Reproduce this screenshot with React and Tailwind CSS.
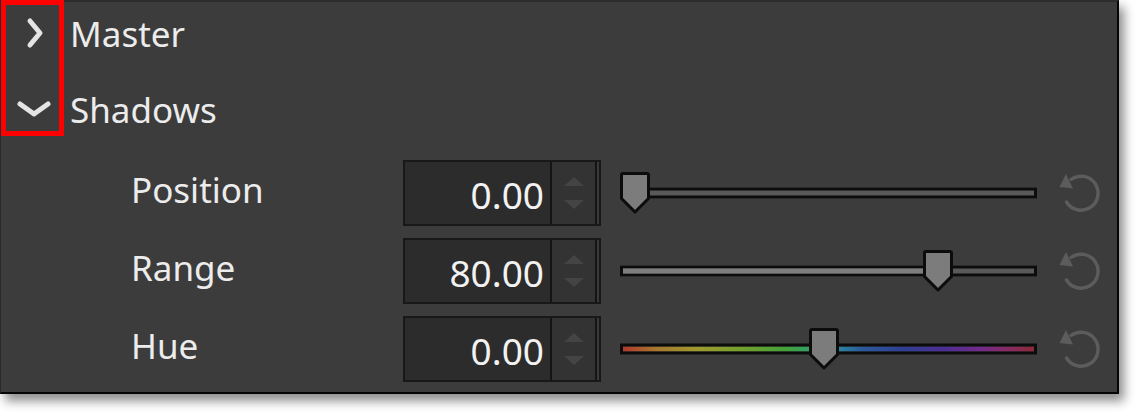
import { useState } from 'react'

const params = [
  { label: 'Position', value: '0.00', thumb: -1, kind: 'plain' },
  { label: 'Range', value: '80.00', thumb: 302, kind: 'filled' },
  { label: 'Hue', value: '0.00', thumb: 188, kind: 'hue' },
]

function ChevronRight() {
  return (
    <svg width="18" height="32" viewBox="0 0 18 32" fill="none">
      <path d="M4 4 L14 16 L4 28" stroke="#e4e4e4" strokeWidth="5" strokeLinecap="round" strokeLinejoin="round" />
    </svg>
  )
}

function ChevronDown() {
  return (
    <svg width="36" height="18" viewBox="0 0 36 18" fill="none">
      <path d="M4 4 L18 14 L32 4" stroke="#e4e4e4" strokeWidth="5" strokeLinecap="round" strokeLinejoin="round" />
    </svg>
  )
}

function Spinner() {
  return (
    <div className="flex h-full w-[43px] flex-col items-center justify-center gap-[14px] bg-[#333333]">
      <svg width="20" height="9" viewBox="0 0 20 9">
        <polygon points="10,0 20,9 0,9" fill="#444444" />
      </svg>
      <svg width="20" height="9" viewBox="0 0 20 9">
        <polygon points="0,0 20,0 10,9" fill="#444444" />
      </svg>
    </div>
  )
}

function NumberBox({ value }) {
  return (
    <div className="flex h-[66px] w-[198px] border-2 border-[#181818] bg-[#2c2c2c]">
      <div className="flex h-full w-[145px] items-center justify-end pr-[6px] pt-[4px] text-[37px] text-[#f2f2f2]">
        {value}
      </div>
      <div className="h-full w-[2px] bg-[#141414]" />
      <Spinner />
      <div className="h-full w-[2px] bg-[#141414]" />
      <div className="h-full flex-1 bg-[#3a3a3a]" />
    </div>
  )
}

function Thumb({ left }) {
  return (
    <svg
      className="absolute top-1/2 -translate-y-1/2"
      style={{ left }}
      width="32"
      height="43"
      viewBox="0 0 32 43"
    >
      <path
        d="M2.5 3.5 Q2.5 2 4 2 L28 2 Q29.5 2 29.5 3.5 L29.5 27 L16 40.5 L2.5 27 Z"
        fill="#7c7c7c"
        stroke="#0c0c0c"
        strokeWidth="3"
        strokeLinejoin="round"
      />
    </svg>
  )
}

function Slider({ thumb, kind }) {
  let track = 'bg-[#595959]'
  if (kind === 'hue') {
    track =
      'bg-[linear-gradient(90deg,#b3382c_0%,#a7772e_8%,#9e9a2e_18%,#6fa12e_30%,#42a13a_40%,#2aa07c_48%,#2a8aa0_52%,#2a5a9c_58%,#2f3e94_68%,#4b2e94_78%,#6e2a8c_86%,#862a68_93%,#8c2a36_100%)]'
  }
  return (
    <div className="relative h-[44px] w-[417px]">
      <div className={`absolute left-0 right-0 top-1/2 h-[11px] -translate-y-1/2 border-[3px] border-[#0c0c0c] ${track}`}>
        {kind === 'filled' && <div className="h-full w-[310px] bg-[#7e7e7e]" />}
      </div>
      <Thumb left={thumb} />
    </div>
  )
}

function ResetIcon() {
  return (
    <svg width="46" height="44" viewBox="0 0 46 44" fill="none">
      <path d="M13 8.5 A17 17 0 1 1 8.5 31" stroke="#5c5c5c" strokeWidth="3.4" strokeLinecap="round" />
      <polygon points="8,3 1.5,16 15,17.5" fill="#5c5c5c" />
    </svg>
  )
}

export default function App() {
  const [open] = useState(true)

  return (
    <div className="h-[412px] w-[1137px] bg-white" style={{ fontFamily: '"Noto Sans", "Open Sans", sans-serif' }}>
      <div className="relative h-[394px] w-[1119px] border-b-2 border-l border-r-2 border-t-2 border-b-[#050505] border-l-[#2a2a2a] border-r-[#050505] border-t-[#2c2c2c] bg-[#3c3c3c] shadow-[5px_7px_10px_rgba(0,0,0,0.45)]">
        {/* highlighted toggle column */}
        <div className="absolute left-0 top-[-2px] h-[136px] w-[63px] border-[5px] border-[#ff0000]" />

        <div className="flex h-[62px] items-center">
          <div className="flex w-[69px] justify-center pl-[2px] pr-[4px]">
            <ChevronRight />
          </div>
          <span className="text-[35px] leading-none text-[#ececec]">Master</span>
        </div>

        <div className="flex h-[90px] items-center">
          <div className="flex w-[69px] justify-center pr-[4px]">
            {open && <ChevronDown />}
          </div>
          <span className="text-[35px] leading-none text-[#ececec]">Shadows</span>
        </div>

        {params.map((p) => (
          <div key={p.label} className="flex h-[78px] items-center">
            <div className="w-[402px] pb-[8px] pl-[130px] text-[35px] leading-none text-[#ececec]">{p.label}</div>
            <NumberBox value={p.value} />
            <div className="ml-[19px] flex items-center">
              <Slider thumb={p.thumb} kind={p.kind} />
            </div>
            <div className="ml-[21px] flex items-center">
              <ResetIcon />
            </div>
          </div>
        ))}
      </div>
    </div>
  )
}
